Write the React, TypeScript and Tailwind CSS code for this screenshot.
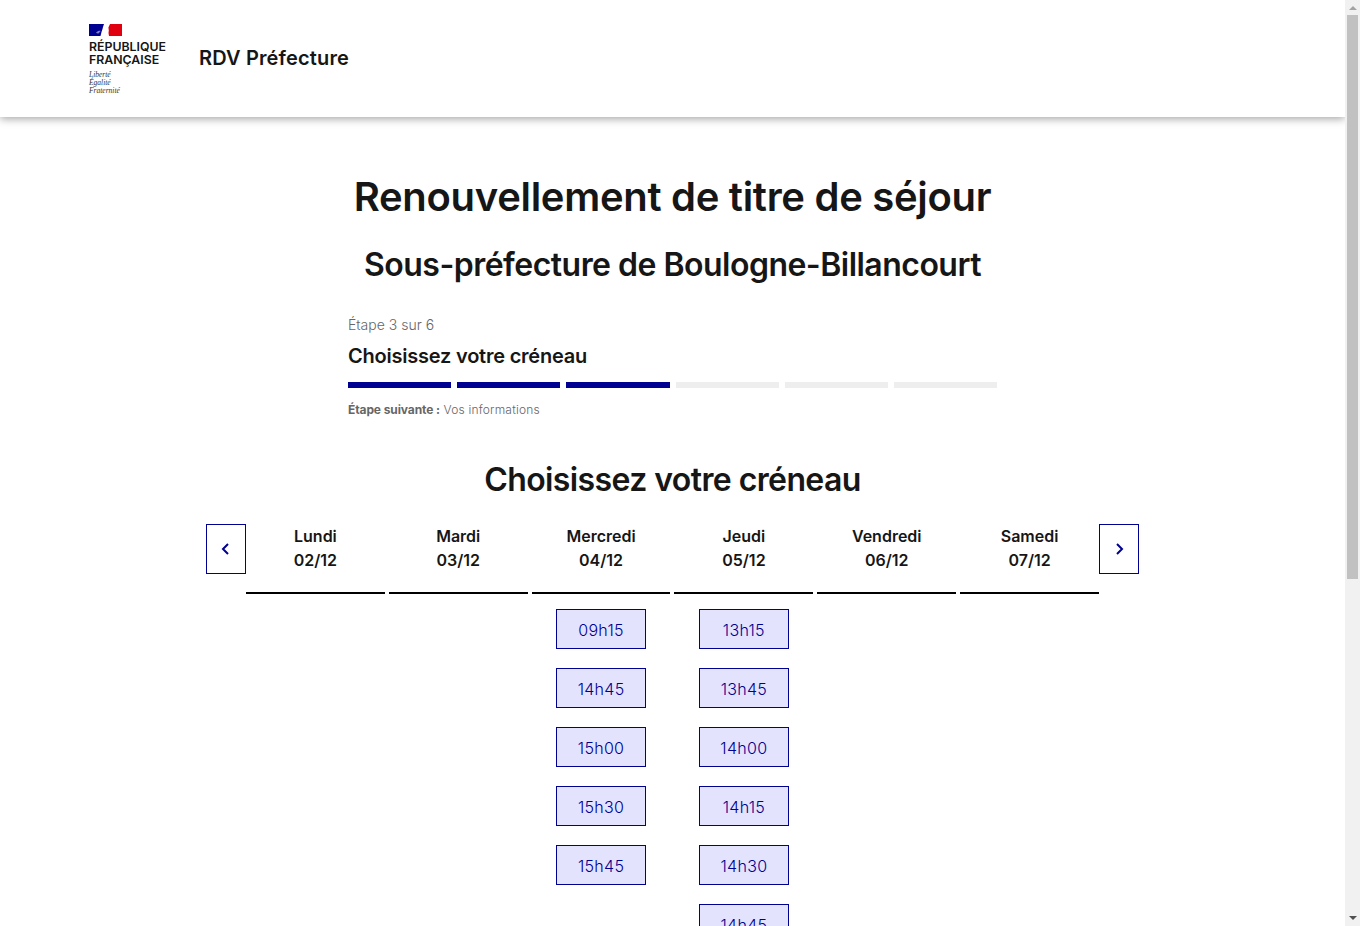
const days = [
  { name: "Lundi", date: "02/12", slots: [] as string[] },
  { name: "Mardi", date: "03/12", slots: [] as string[] },
  { name: "Mercredi", date: "04/12", slots: ["09h15", "14h45", "15h00", "15h30", "15h45"] },
  { name: "Jeudi", date: "05/12", slots: ["13h15", "13h45", "14h00", "14h15", "14h30", "14h45"] },
  { name: "Vendredi", date: "06/12", slots: [] as string[] },
  { name: "Samedi", date: "07/12", slots: [] as string[] },
];

function Logo() {
  return (
    <div className="mt-[2px] w-[78px]">
      <svg width="33" height="12" viewBox="0 0 33 12" className="block">
        <rect width="33" height="12" fill="#fff" />
        {/* blue field, white bust cuts in from the right */}
        <path d="M0 0h15L14 3 13.500 5 12.500 8l-1 4H0z" fill="#000091" />
        <path d="M21 0h12v12H20l-.5-3 .3-2.500-.4-3L21 0z" fill="#e1000f" />
        {/* swirl in the blue */}
        <path d="M7 8.500c.8-.8 2-1.500 3-1.700.7-.2 1.300-.1 1.700.1-.6.500-1 1-1.300 1.500-.3.600-.7 1-1.300 1.100-.7.100-1.500-.2-2.100-1z" fill="#7f7fc4" />
      </svg>
      <p className="mt-[4px] text-[12.300px] leading-[13px] font-semibold text-[#161616]">
        RÉPUBLIQUE
        <br />
        FRANÇAISE
      </p>
      <p className="mt-[5px] font-['Liberation_Serif',serif] text-[7.500px] leading-[8px] text-[#333] italic">
        Liberté
        <br />
        Égalité
        <br />
        Fraternité
      </p>
    </div>
  );
}

function Arrow({ dir }: { dir: "left" | "right" }) {
  return (
    <button className="flex h-[50px] w-10 shrink-0 items-center justify-center border border-[#000091] bg-white text-[#000091]">
      <svg width="16" height="16" viewBox="0 0 16 16" fill="none" stroke="currentColor" strokeWidth="2">
        <path d={dir === "left" ? "M10 3 5 8l5 5" : "M6 3l5 5-5 5"} />
      </svg>
    </button>
  );
}

function Scrollbar() {
  return (
    <div className="fixed top-0 right-0 bottom-0 flex w-[15px] flex-col items-center bg-[#f1f1f1]">
      <div className="mt-[6px] h-0 w-0 border-x-[4px] border-b-[4px] border-x-transparent border-b-[#a3a3a3]" />
      <div className="mt-[5px] h-[564px] w-[11px] bg-[#c1c1c1]" />
      <div className="mt-auto mb-[6px] h-0 w-0 border-x-[4px] border-t-[4px] border-x-transparent border-t-[#505050]" />
    </div>
  );
}

export default function App() {
  return (
    <div className="min-h-[1100px] w-full bg-white pr-[15px] font-['Inter',sans-serif] text-[#161616]">
      {/* Header */}
      <header className="flex h-[117px] items-center bg-white pl-[89px] shadow-[0_2px_8px_rgba(0,0,0,0.35)]">
        <Logo />
        <span className="mb-[2px] ml-[32px] text-[20px] font-semibold tracking-[0.15px]">RDV Préfecture</span>
      </header>

      <main className="flex flex-col items-center">
        <h1 className="mt-[56px] text-[40px] leading-[48px] font-semibold tracking-[-0.3px]">Renouvellement de titre de séjour</h1>
        <h2 className="mt-[24px] text-[32px] leading-[40px] font-semibold tracking-[-0.52px]">Sous-préfecture de Boulogne-Billancourt</h2>

        {/* Stepper */}
        <div className="mt-[28px] w-[649px]">
          <p className="text-[14px] leading-[24px] font-light text-[#666]">Étape 3 sur 6</p>
          <p className="mt-[5px] text-[20px] leading-[28px] font-semibold tracking-[-0.22px]">Choisissez votre créneau</p>
          <div className="mt-[12px] flex gap-[6px]">
            {[0, 1, 2, 3, 4, 5].map((i) => (
              <div key={i} className={`h-[6px] flex-1 ${i < 3 ? "bg-[#000091]" : "bg-[#eeeeee]"}`} />
            ))}
          </div>
          <p className="mt-[12px] text-[12px] leading-[20px] font-light tracking-[0.2px] text-[#666]">
            <span className="font-bold tracking-[-0.1px]">Étape suivante :</span> Vos informations
          </p>
        </div>

        <h3 className="mt-[40px] text-[32px] leading-[40px] font-semibold tracking-[-0.6px]">Choisissez votre créneau</h3>

        {/* Calendar */}
        <div className="mt-[24px] flex w-[933px] items-start">
          <Arrow dir="left" />
          <div className="flex flex-1 gap-[4px]">
            {days.map((d) => (
              <div key={d.name} className="flex-1">
                <div className="h-[70px] border-b-2 border-black text-center text-[16px] leading-[24px] font-semibold">
                  {d.name}
                  <br />
                  {d.date}
                </div>
                <div className="flex flex-col items-center gap-[19px] pt-[15px]">
                  {d.slots.map((s) => (
                    <button
                      key={s}
                      className="h-10 w-[90px] border border-[#000091] bg-[#e3e3fd] pt-[2px] text-[16px] font-light tracking-[0.3px] text-[#000091]"
                    >
                      {s}
                    </button>
                  ))}
                </div>
              </div>
            ))}
          </div>
          <Arrow dir="right" />
        </div>
      </main>
      <Scrollbar />
    </div>
  );
}
